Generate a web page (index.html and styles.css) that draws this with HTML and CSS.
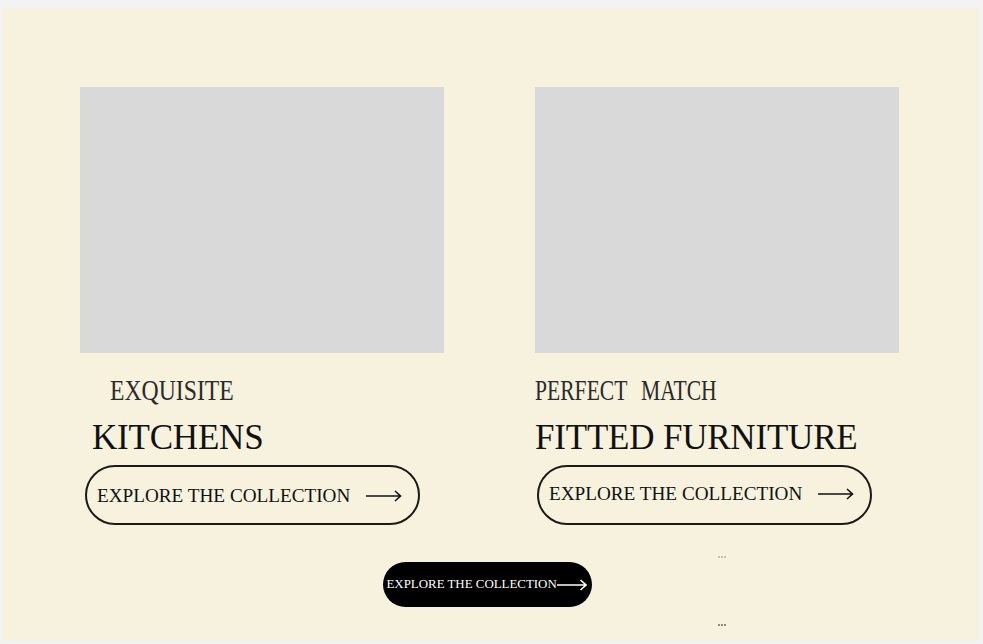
FILE: index.html
```html
<!DOCTYPE html>
<html lang="en">
<head>
<meta charset="utf-8">
<title>Collections</title>
<link rel="stylesheet" href="styles.css">
</head>
<body>
<main class="panel">
  <section class="cards">
    <article class="card card-left">
      <div class="photo"></div>
      <p class="eyebrow"><span class="squeeze">EXQUISITE</span></p>
      <h2 class="title">KITCHENS</h2>
      <a class="pill" href="#">
        <span class="pill-text">EXPLORE THE COLLECTION</span>
        <svg class="arrow" width="36" height="12" viewBox="0 0 36 12" fill="none" stroke="#111" stroke-width="1.6"><path d="M0 6H34.5M29 1L34.5 6L29 11"/></svg>
      </a>
    </article>
    <article class="card card-right">
      <div class="photo"></div>
      <p class="eyebrow"><span class="squeeze">PERFECT MATCH</span></p>
      <h2 class="title">FITTED FURNITURE</h2>
      <a class="pill" href="#">
        <span class="pill-text">EXPLORE THE COLLECTION</span>
        <svg class="arrow" width="36" height="12" viewBox="0 0 36 12" fill="none" stroke="#111" stroke-width="1.6"><path d="M0 6H34.5M29 1L34.5 6L29 11"/></svg>
      </a>
    </article>
  </section>
  <div class="cta-row">
    <a class="cta" href="#">
      <span>EXPLORE THE COLLECTION</span>
      <svg width="30" height="12" viewBox="0 0 30 12" fill="none" stroke="#fff" stroke-width="1.6"><path d="M0 6H29M23.5 1L29 6L23.5 11"/></svg>
    </a>
  </div>
  <span class="dots dots-top"><i></i><i></i><i></i></span>
  <span class="dots dots-bottom"><i></i><i></i><i></i></span>
</main>
</body>
</html>
```
FILE: styles.css
```css
html, body {
  margin: 0;
  padding: 0;
}
body {
  background: #f3f3f3;
  padding: 8px 4px 3px 2px;
  font-family: "Liberation Serif", "Times New Roman", serif;
  color: #111;
}
.panel {
  position: relative;
  background: #f7f2de;
  height: 633px;
  box-sizing: border-box;
  padding: 79px 0 0 78px;
}
.cards {
  display: grid;
  grid-template-columns: 364px 364px;
  column-gap: 91px;
}
.card {
  display: flex;
  flex-direction: column;
  align-items: flex-start;
}
.photo {
  width: 364px;
  height: 266px;
  background: #d9d9d9;
}
.eyebrow {
  margin: 22px 0 0 0;
  font-size: 30px;
  line-height: 30px;
  height: 30px;
  font-weight: 400;
  white-space: nowrap;
  color: #2a2a2a;
}
.squeeze {
  display: inline-block;
  transform: scaleX(0.79);
  transform-origin: left center;
}
.card-right .squeeze {
  transform: scaleX(0.72);
  word-spacing: 12px;
}
.card-left .eyebrow { margin-left: 30px; }
.title {
  margin: 15px 0 0 0;
  font-size: 35px;
  line-height: 35px;
  font-weight: 400;
  letter-spacing: -0.2px;
  white-space: nowrap;
}
.card-left .title { margin-left: 12px; }
.pill {
  margin-top: 10px;
  width: 335px;
  height: 60px;
  box-sizing: border-box;
  border: 2px solid #1a1a1a;
  border-radius: 30px;
  display: flex;
  align-items: center;
  gap: 16px;
  padding-left: 10px;
  color: #111;
  text-decoration: none;
  font-size: 19.2px;
  white-space: nowrap;
}
.card-left .pill { margin-left: 5px; padding-top: 2px; }
.card-right .pill { margin-left: 2px; padding-bottom: 3px; }
.arrow { flex: none; }
.cta-row {
  display: flex;
  justify-content: center;
  margin-top: 37px;
  padding-right: 85px;
}
.cta {
  width: 209px;
  height: 45px;
  box-sizing: border-box;
  background: #000;
  color: #fff;
  border-radius: 23px;
  display: flex;
  align-items: center;
  padding-left: 4px;
  font-size: 12.9px;
  text-decoration: none;
  white-space: nowrap;
}
.cta svg { flex: none; }
.dots {
  position: absolute;
  left: 716px;
  display: flex;
  gap: 1px;
}
.dots i {
  display: block;
  width: 2px;
  height: 2px;
  background: #c4c0b4;
}
.dots-top { top: 548px; }
.dots-bottom { top: 616px; }
.dots-bottom i { background: #8f8c85; }
```
